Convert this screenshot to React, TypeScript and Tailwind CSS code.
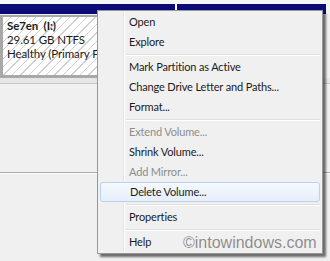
import React from "react";

type Item = { label: string; disabled?: boolean; active?: boolean } | "sep";

const items: Item[] = [
  { label: "Open" },
  { label: "Explore" },
  "sep",
  { label: "Mark Partition as Active" },
  { label: "Change Drive Letter and Paths..." },
  { label: "Format..." },
  "sep",
  { label: "Extend Volume...", disabled: true },
  { label: "Shrink Volume..." },
  { label: "Add Mirror...", disabled: true },
  { label: "Delete Volume...", active: true },
  "sep",
  { label: "Properties" },
  "sep",
  { label: "Help" },
];

function ContextMenu() {
  return (
    <div className="absolute left-[97px] top-[10px] w-[226px] border border-[#979797] bg-[#f0f0f0] py-[1px] shadow-[3px_3px_2px_rgba(0,0,0,0.55)]">
      {/* icon gutter line */}
      <div className="absolute left-[25px] top-[1px] bottom-[1px] w-[2px] border-l border-[#e2e3e3] bg-white" />
      {items.map((it, i) =>
        it === "sep" ? (
          <div key={i} className="flex h-[5px] items-center pl-[28px] pr-[2px]">
            <div className="h-[2px] w-full border-t border-[#e0e0e0] bg-white" />
          </div>
        ) : (
          <div
            key={i}
            className={
              "relative mx-[2px] flex h-[20px] items-center rounded-[3px] pl-[29px] text-[11px] tracking-[-0.15px] " +
              (it.active
                ? "border border-[#b9d3ee] bg-[linear-gradient(#f5f9fe,#e5eef9)] pl-[28px]"
                : "") +
              (it.disabled ? " text-[#8d8d8d]" : " text-[#1b1b1b]")
            }
          >
            {it.label}
          </div>
        )
      )}
    </div>
  );
}

export default function App() {
  return (
    <div className="relative h-[261px] w-[330px] overflow-hidden bg-[#f0f0f0] font-['Lato',sans-serif]">
      <div className="h-[4px] bg-[#f6f6f6]" />
      <div className="flex h-[10px]">
        <div className="w-[175px] bg-[#0b0b78]" />
        <div className="w-[2px] bg-white" />
        <div className="w-[149px] bg-[#0b0b78]" />
        <div className="flex-1 bg-[#f4f4f4]" />
      </div>
      <div className="mt-[1px] h-[63px] w-[97px] overflow-hidden border-[3px] border-r-0 border-t-2 border-[#a8a8a8] bg-[repeating-linear-gradient(135deg,#ffffff_0px,#ffffff_5px,#cfcfcf_5px,#cfcfcf_6px)] pl-[4px] pt-[2px] text-[11.5px] leading-[14px] tracking-[-0.1px] text-[#1b1b1b]">
        <div className="font-bold">Se7en&nbsp; (I:)</div>
        <div>29.61 GB NTFS</div>
        <div className="whitespace-nowrap">Healthy (Primary Partition)</div>
      </div>
      <div className="h-[5px] bg-[#e6e6e6]" />
      <div className="h-[1px] bg-[#c9c9c9]" />
      <div className="h-[88px]" />
      <div className="h-[1px] bg-[#a9a9a9]" />
      <div className="h-[1px] bg-white" />
      <ContextMenu />
      <div className="absolute left-[183px] top-[234px] font-['Liberation_Sans',sans-serif] text-[16px] leading-[18px] text-[#8c8c8c] [text-shadow:0_0_1px_#fff]">
        ©intowindows.com
      </div>
    </div>
  );
}
